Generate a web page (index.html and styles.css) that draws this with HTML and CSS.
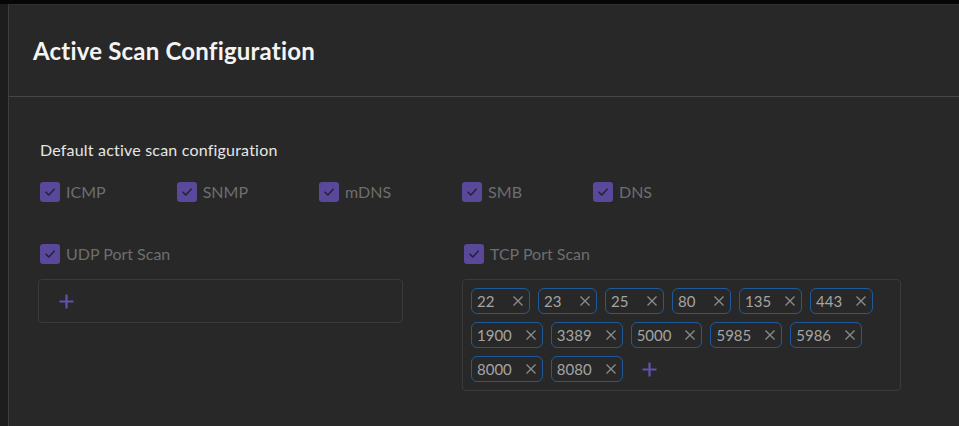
FILE: index.html
```html
<!DOCTYPE html>
<html lang="en">
<head>
<meta charset="utf-8">
<title>Active Scan Configuration</title>
<link rel="stylesheet" href="styles.css">
</head>
<body>
<div class="topbar"></div>
<div class="frame">
  <section class="panel">
    <header class="panel-header">
      <h1 class="panel-title">Active Scan Configuration</h1>
    </header>
    <div class="panel-body">
      <p class="section-title">Default active scan configuration</p>
      <div class="check-row">
        <label class="check"><span class="box"><svg viewBox="0 0 20 20" width="20" height="20"><path d="M6 10.2 L8.8 13 L14.2 7.2" fill="none" stroke="#25233a" stroke-width="1.6" stroke-linecap="round" stroke-linejoin="round"/></svg></span><span class="check-label">ICMP</span></label>
        <label class="check"><span class="box"><svg viewBox="0 0 20 20" width="20" height="20"><path d="M6 10.2 L8.8 13 L14.2 7.2" fill="none" stroke="#25233a" stroke-width="1.6" stroke-linecap="round" stroke-linejoin="round"/></svg></span><span class="check-label">SNMP</span></label>
        <label class="check"><span class="box"><svg viewBox="0 0 20 20" width="20" height="20"><path d="M6 10.2 L8.8 13 L14.2 7.2" fill="none" stroke="#25233a" stroke-width="1.6" stroke-linecap="round" stroke-linejoin="round"/></svg></span><span class="check-label">mDNS</span></label>
        <label class="check"><span class="box"><svg viewBox="0 0 20 20" width="20" height="20"><path d="M6 10.2 L8.8 13 L14.2 7.2" fill="none" stroke="#25233a" stroke-width="1.6" stroke-linecap="round" stroke-linejoin="round"/></svg></span><span class="check-label">SMB</span></label>
        <label class="check"><span class="box"><svg viewBox="0 0 20 20" width="20" height="20"><path d="M6 10.2 L8.8 13 L14.2 7.2" fill="none" stroke="#25233a" stroke-width="1.6" stroke-linecap="round" stroke-linejoin="round"/></svg></span><span class="check-label">DNS</span></label>
      </div>

      <div class="ports">
        <div class="port-col port-col-udp">
          <label class="check check-indent"><span class="box"><svg viewBox="0 0 20 20" width="20" height="20"><path d="M6 10.2 L8.8 13 L14.2 7.2" fill="none" stroke="#25233a" stroke-width="1.6" stroke-linecap="round" stroke-linejoin="round"/></svg></span><span class="check-label">UDP Port Scan</span></label>
          <div class="tag-input">
            <span class="add"><svg viewBox="0 0 15 15" width="15" height="15"><path d="M7.5 0.5 V14.5 M0.5 7.5 H14.5" stroke="#6350ad" stroke-width="2.2" fill="none"/></svg></span>
          </div>
        </div>
        <div class="port-col port-col-tcp">
          <label class="check check-indent"><span class="box"><svg viewBox="0 0 20 20" width="20" height="20"><path d="M6 10.2 L8.8 13 L14.2 7.2" fill="none" stroke="#25233a" stroke-width="1.6" stroke-linecap="round" stroke-linejoin="round"/></svg></span><span class="check-label">TCP Port Scan</span></label>
          <div class="tag-input">
            <span class="tag"><span class="tag-text">22</span><svg class="x" viewBox="0 0 10 10" width="10" height="10"><path d="M0.5 0.5 L9.5 9.5 M9.5 0.5 L0.5 9.5" stroke="#8a8a8a" stroke-width="1.4" fill="none"/></svg></span>
            <span class="tag"><span class="tag-text">23</span><svg class="x" viewBox="0 0 10 10" width="10" height="10"><path d="M0.5 0.5 L9.5 9.5 M9.5 0.5 L0.5 9.5" stroke="#8a8a8a" stroke-width="1.4" fill="none"/></svg></span>
            <span class="tag"><span class="tag-text">25</span><svg class="x" viewBox="0 0 10 10" width="10" height="10"><path d="M0.5 0.5 L9.5 9.5 M9.5 0.5 L0.5 9.5" stroke="#8a8a8a" stroke-width="1.4" fill="none"/></svg></span>
            <span class="tag"><span class="tag-text">80</span><svg class="x" viewBox="0 0 10 10" width="10" height="10"><path d="M0.5 0.5 L9.5 9.5 M9.5 0.5 L0.5 9.5" stroke="#8a8a8a" stroke-width="1.4" fill="none"/></svg></span>
            <span class="tag"><span class="tag-text">135</span><svg class="x" viewBox="0 0 10 10" width="10" height="10"><path d="M0.5 0.5 L9.5 9.5 M9.5 0.5 L0.5 9.5" stroke="#8a8a8a" stroke-width="1.4" fill="none"/></svg></span>
            <span class="tag"><span class="tag-text">443</span><svg class="x" viewBox="0 0 10 10" width="10" height="10"><path d="M0.5 0.5 L9.5 9.5 M9.5 0.5 L0.5 9.5" stroke="#8a8a8a" stroke-width="1.4" fill="none"/></svg></span>
            <span class="tag"><span class="tag-text">1900</span><svg class="x" viewBox="0 0 10 10" width="10" height="10"><path d="M0.5 0.5 L9.5 9.5 M9.5 0.5 L0.5 9.5" stroke="#8a8a8a" stroke-width="1.4" fill="none"/></svg></span>
            <span class="tag"><span class="tag-text">3389</span><svg class="x" viewBox="0 0 10 10" width="10" height="10"><path d="M0.5 0.5 L9.5 9.5 M9.5 0.5 L0.5 9.5" stroke="#8a8a8a" stroke-width="1.4" fill="none"/></svg></span>
            <span class="tag"><span class="tag-text">5000</span><svg class="x" viewBox="0 0 10 10" width="10" height="10"><path d="M0.5 0.5 L9.5 9.5 M9.5 0.5 L0.5 9.5" stroke="#8a8a8a" stroke-width="1.4" fill="none"/></svg></span>
            <span class="tag"><span class="tag-text">5985</span><svg class="x" viewBox="0 0 10 10" width="10" height="10"><path d="M0.5 0.5 L9.5 9.5 M9.5 0.5 L0.5 9.5" stroke="#8a8a8a" stroke-width="1.4" fill="none"/></svg></span>
            <span class="tag"><span class="tag-text">5986</span><svg class="x" viewBox="0 0 10 10" width="10" height="10"><path d="M0.5 0.5 L9.5 9.5 M9.5 0.5 L0.5 9.5" stroke="#8a8a8a" stroke-width="1.4" fill="none"/></svg></span>
            <span class="tag"><span class="tag-text">8000</span><svg class="x" viewBox="0 0 10 10" width="10" height="10"><path d="M0.5 0.5 L9.5 9.5 M9.5 0.5 L0.5 9.5" stroke="#8a8a8a" stroke-width="1.4" fill="none"/></svg></span>
            <span class="tag"><span class="tag-text">8080</span><svg class="x" viewBox="0 0 10 10" width="10" height="10"><path d="M0.5 0.5 L9.5 9.5 M9.5 0.5 L0.5 9.5" stroke="#8a8a8a" stroke-width="1.4" fill="none"/></svg></span>
            <span class="add"><svg viewBox="0 0 15 15" width="15" height="15"><path d="M7.5 0.5 V14.5 M0.5 7.5 H14.5" stroke="#6350ad" stroke-width="2.2" fill="none"/></svg></span>
          </div>
        </div>
      </div>
    </div>
  </section>
</div>
</body>
</html>
```

FILE: styles.css
```css
* { box-sizing: border-box; }

html, body {
  margin: 0;
  padding: 0;
  height: 100%;
}

body {
  background: #1d1d1d;
  font-family: Lato, "Open Sans", "Liberation Sans", sans-serif;
  overflow: hidden;
}

.topbar {
  height: 4px;
  background: #060606;
}

.frame {
  display: flex;
  padding-left: 8px;
  height: calc(100% - 4px);
}

.panel {
  flex: 1;
  background: #282828;
  border-left: 1px solid #3e3e3e;
  border-top: 1px solid #303030;
}

.panel-header {
  height: 92px;
  display: flex;
  align-items: center;
  padding-left: 24px;
  padding-top: 1px;
  border-bottom: 1px solid #464646;
}

.panel-title {
  margin: 0;
  font-size: 24px;
  font-weight: 700;
  line-height: 28px;
  letter-spacing: 0.2px;
  color: #f4f4f4;
}

.panel-body {
  padding: 43px 0 0 29px;
}

.section-title {
  margin: 0 0 0 2px;
  font-size: 16px;
  line-height: 20px;
  letter-spacing: 0.2px;
  color: #e6e6e6;
}

.check-row {
  display: flex;
  gap: 71px;
  margin-top: 22px;
  padding-left: 2px;
}

.check {
  display: flex;
  align-items: center;
  gap: 6px;
  font-size: 16px;
  line-height: 20px;
  color: #6e6e6e;
}

.box {
  width: 20px;
  height: 20px;
  border-radius: 3px;
  background: #5a489b;
  display: flex;
}

.ports {
  display: grid;
  grid-template-columns: 365px 439px;
  column-gap: 59px;
  margin-top: 42px;
}

.check-indent {
  margin-left: 2px;
}

.tag-input {
  margin-top: 15px;
  border: 1px solid #3b3b3b;
  border-radius: 4px;
  padding: 8px;
  display: flex;
  flex-wrap: wrap;
  gap: 8px;
}

.tag {
  height: 26px;
  display: flex;
  align-items: center;
  border: 1px solid #1f5b9b;
  border-radius: 6px;
  padding-left: 5px;
  font-size: 15px;
  color: #a4a4a4;
}

.tag-text {
  min-width: 22px;
  line-height: 18px;
}

.x {
  margin-left: 14px;
  margin-right: 6px;
  display: block;
}

.add {
  width: 38px;
  height: 26px;
  display: flex;
  align-items: center;
  justify-content: center;
}

.add svg {
  display: block;
}
```
